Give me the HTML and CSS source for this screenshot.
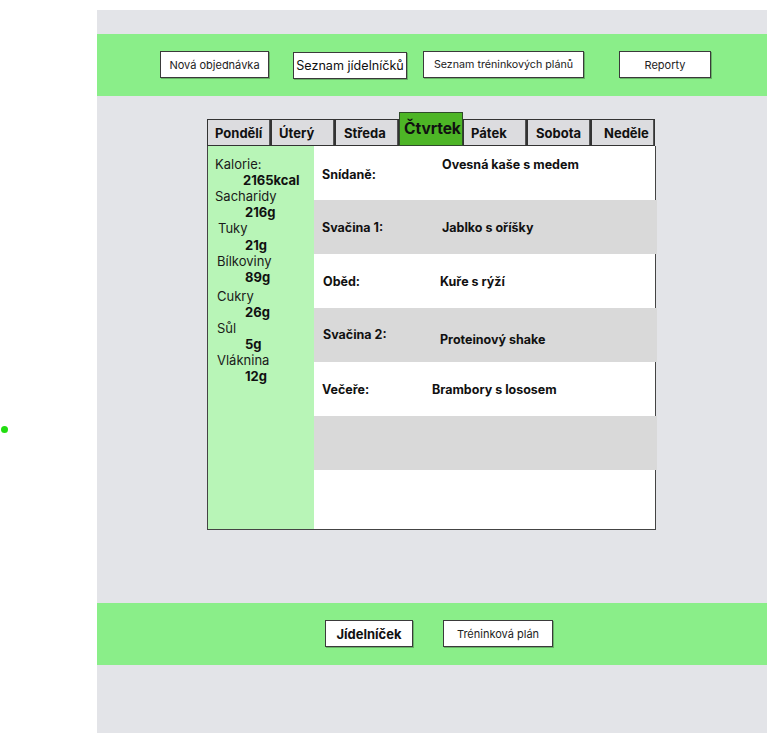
FILE: index.html
```html
<!DOCTYPE html>
<html lang="cs">
<head>
<meta charset="utf-8">
<title>Jídelníček</title>
<link rel="stylesheet" href="styles.css">
</head>
<body>
<span class="dot"></span>
<div class="frame">
  <header class="bar top-bar">
    <div class="btn b1">Nová objednávka</div>
    <div class="btn b2">Seznam jídelníčků</div>
    <div class="btn b3">Seznam tréninkových plánů</div>
    <div class="btn b4">Reporty</div>
  </header>

  <main class="plan">
    <nav class="tabs">
      <div class="tab t-po">Pondělí</div>
      <div class="tab t-ut">Úterý</div>
      <div class="tab t-st">Středa</div>
      <div class="tab active">Čtvrtek</div>
      <div class="tab t-pa">Pátek</div>
      <div class="tab t-so">Sobota</div>
      <div class="tab t-ne">Neděle</div>
    </nav>
    <section class="content">
      <aside class="nutri">
        <div class="lbl">Kalorie:</div>
        <div class="val">2165kcal</div>
        <div class="lbl">Sacharidy</div>
        <div class="val v2">216g</div>
        <div class="lbl l3">Tuky</div>
        <div class="val v3">21g</div>
        <div class="lbl l2">Bílkoviny</div>
        <div class="val v2">89g</div>
        <div class="lbl l2 gap">Cukry</div>
        <div class="val v2">26g</div>
        <div class="lbl l2">Sůl</div>
        <div class="val v2">5g</div>
        <div class="lbl l2">Vláknina</div>
        <div class="val v2">12g</div>
      </aside>
      <div class="meals">
        <div class="row">
          <div class="meal m-a">Snídaně:</div>
          <div class="food f-a">Ovesná kaše s medem</div>
        </div>
        <div class="row grey">
          <div class="meal">Svačina 1:</div>
          <div class="food f-b">Jablko s oříšky</div>
        </div>
        <div class="row">
          <div class="meal m-c">Oběd:</div>
          <div class="food f-c">Kuře s rýží</div>
        </div>
        <div class="row grey">
          <div class="meal m-c m-d">Svačina 2:</div>
          <div class="food f-c f-d">Proteinový shake</div>
        </div>
        <div class="row">
          <div class="meal m-e">Večeře:</div>
          <div class="food f-e">Brambory s lososem</div>
        </div>
        <div class="row grey"></div>
        <div class="row last"></div>
      </div>
    </section>
  </main>

  <footer class="bar bottom-bar">
    <div class="btn c1">Jídelníček</div>
    <div class="btn c2">Tréninková plán</div>
  </footer>
</div>
</body>
</html>
```

FILE: styles.css
```css
* { box-sizing: border-box; }

html, body {
  margin: 0;
  padding: 0;
  background: #ffffff;
  font-family: Inter, "Noto Sans", "Liberation Sans", sans-serif;
  color: #111111;
}

.dot {
  position: absolute;
  left: 1px;
  top: 426px;
  width: 7px;
  height: 7px;
  border-radius: 50%;
  background: #22dd11;
}

.frame {
  margin: 10px 0 0 97px;
  width: 670px;
  height: 723px;
  background: #e3e4e8;
  padding-top: 24px;
}

.bar {
  height: 62px;
  background: #8aee89;
  display: flex;
  align-items: flex-start;
  padding-top: 17px;
}

.btn {
  height: 27px;
  background: #ffffff;
  border: 1px solid #3a3a3a;
  box-shadow: 1px 1px 0 rgba(0, 0, 0, 0.25);
  display: flex;
  align-items: center;
  justify-content: center;
  font-size: 11px;
  color: #222;
  white-space: nowrap;
}

.b1 { margin-left: 63px; width: 109px; }
.b2 { margin-left: 24px; width: 114px; margin-top: 1px; font-size: 12.6px; color: #111; }
.b3 { margin-left: 16px; width: 161px; font-size: 10.7px; }
.b4 { margin-left: 35px; width: 92px; }

.plan {
  padding: 16px 0 0 110px;
  height: 507px;
}

.tabs {
  display: flex;
  align-items: flex-end;
  height: 34px;
}

.tab {
  width: 64px;
  height: 27px;
  background: #dcdcdf;
  border: 1px solid #333;
  box-shadow: inset -1px 0 0 #555;
  display: flex;
  align-items: center;
  padding-left: 7px;
  font-size: 13px;
  font-weight: 700;
  white-space: nowrap;
}

.t-ut { padding-left: 7px; }
.t-st { padding-left: 8px; }
.t-pa { padding-left: 7px; }
.t-so { padding-left: 8px; }
.t-ne { padding-left: 12px; }

.tab.active {
  height: 34px;
  background: #4db526;
  border-color: #2f4a2a;
  font-size: 15.6px;
  letter-spacing: -0.1px;
  padding-left: 4px;
  padding-bottom: 2px;
  box-shadow: none;
}

.content {
  display: flex;
  width: 449px;
  height: 384px;
  border-left: 1px solid #444;
  border-bottom: 1px solid #444;
}

.nutri {
  width: 106px;
  background: #b8f5b7;
  padding: 10px 0 0 7px;
  font-size: 13px;
  line-height: 16px;
}

.lbl { color: #1a1a1a; }
.l2 { padding-left: 2px; }
.l3 { padding-left: 3px; }
.gap { margin-top: 3px; }

.val {
  font-weight: 700;
  padding-left: 28px;
}
.v2 { padding-left: 30px; }
.v3 { padding-left: 30px; margin-top: 1px; }

.meals {
  flex: 1;
  display: flex;
  flex-direction: column;
  border-right: 1px solid #444;
  background: #ffffff;
}

.row {
  height: 54px;
  display: flex;
  align-items: center;
  padding-left: 8px;
  font-size: 12.5px;
  font-weight: 700;
  white-space: nowrap;
}

.row.grey {
  background: #d9d9d9;
  margin-right: -2px;
}

.row.last { flex: 1; }

.meal { width: 120px; }
.m-a { margin-top: 2px; }
.m-c { padding-left: 1px; width: 117px; }
.m-d { margin-bottom: 2px; }
.m-e { width: 110px; }

.f-a { margin-bottom: 17px; }
.f-c { padding-left: 1px; }
.f-d { margin-top: 8px; }

.c1 {
  margin-left: 228px;
  width: 88px;
  font-size: 13px;
  font-weight: 700;
  color: #111;
}

.c2 {
  margin-left: 30px;
  width: 110px;
}
```
